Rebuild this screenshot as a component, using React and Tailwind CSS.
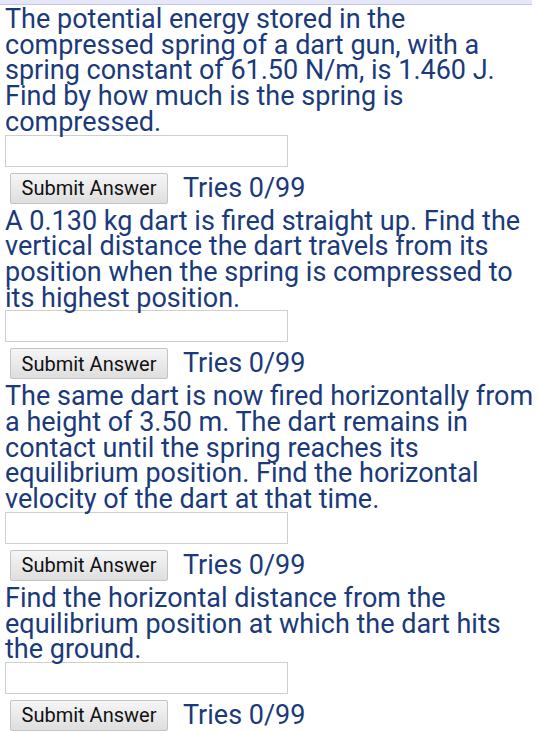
import React from 'react';

const questions = [
  'The potential energy stored in the compressed spring of a dart gun, with a spring constant of 61.50 N/m, is 1.460 J. Find by how much is the spring is compressed.',
  'A 0.130 kg dart is fired straight up. Find the vertical distance the dart travels from its position when the spring is compressed to its highest position.',
  'The same dart is now fired horizontally from a height of 3.50 m. The dart remains in contact until the spring reaches its equilibrium position. Find the horizontal velocity of the dart at that time.',
  'Find the horizontal distance from the equilibrium position at which the dart hits the ground.',
];

const Question = ({ text }) => (
  <div>
    <p className="pt-[2px] text-[27px] leading-[25.7px] text-[#1a3a7c]">{text}</p>
    <input type="text" className="-mt-[1px] block w-[283px] h-[32px] border border-[#cfcfcf] bg-white" />
    <div className="flex items-center mt-[6px] mb-[3px] ml-[5px] gap-[15px]">
      <button className="h-[31px] w-[158px] border border-[#c4c4c4] rounded-[2px] bg-gradient-to-b from-[#f6f6f6] to-[#dedede] text-[20px] leading-none text-[#111]">
        Submit Answer
      </button>
      <span className="text-[27px] leading-none text-[#1a3a7c]">Tries 0/99</span>
    </div>
  </div>
);

export default function App() {
  return (
    <div className="bg-white min-h-[732px] font-['Roboto',sans-serif]">
      <div className="h-[5px] mr-[8px] bg-[#e6e6fa] border-b border-[#c8c8d8]" />
      <div className="pl-[5px] pr-[2px]">
        {questions.map((q, i) => (
          <Question key={i} text={q} />
        ))}
      </div>
    </div>
  );
}
